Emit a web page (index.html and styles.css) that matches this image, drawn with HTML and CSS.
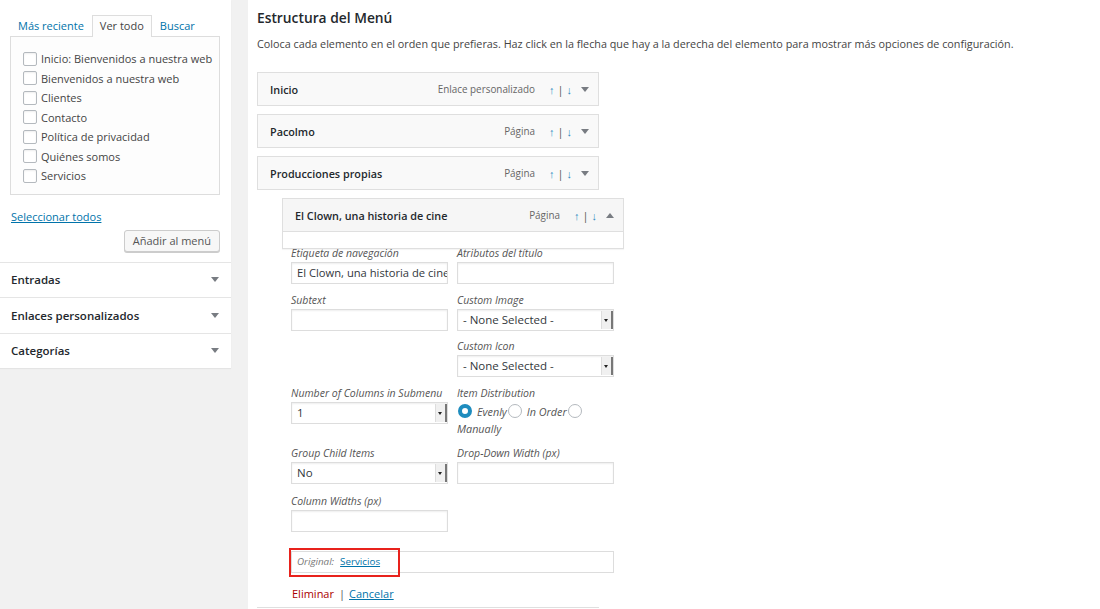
FILE: index.html
```html
<!DOCTYPE html>
<html>
<head>
<meta charset="utf-8">
<title>Menús</title>
<link rel="stylesheet" href="styles.css">
</head>
<body>
<div class="page">
  <div class="side">
    <div class="side-panel">
      <ul class="tabs">
        <li><a href="#">Más reciente</a></li>
        <li class="tab-on">Ver todo</li>
        <li><a href="#">Buscar</a></li>
      </ul>
      <ul class="checklist">
        <li><span class="cb"></span>Inicio: Bienvenidos a nuestra web</li>
        <li><span class="cb"></span>Bienvenidos a nuestra web</li>
        <li><span class="cb"></span>Clientes</li>
        <li><span class="cb"></span>Contacto</li>
        <li><span class="cb"></span>Política de privacidad</li>
        <li><span class="cb"></span>Quiénes somos</li>
        <li><span class="cb"></span>Servicios</li>
      </ul>
      <div class="select-all"><a href="#">Seleccionar todos</a></div>
      <div class="add-row"><span class="btn">Añadir al menú</span></div>
      <div class="acc">Entradas<span class="tri"></span></div>
      <div class="acc">Enlaces personalizados<span class="tri"></span></div>
      <div class="acc">Categorías<span class="tri"></span></div>
    </div>
  </div>

  <div class="main">
    <h3 class="title">Estructura del Menú</h3>
    <p class="desc">Coloca cada elemento en el orden que prefieras. Haz click en la flecha que hay a la derecha del elemento para mostrar más opciones de configuración.</p>

    <div class="item">
      <span class="item-name">Inicio</span>
      <span class="item-type">Enlace personalizado</span>
      <span class="moves"><a>↑</a><i>|</i><a>↓</a></span>
      <span class="tri"></span>
    </div>
    <div class="item">
      <span class="item-name">Pacolmo</span>
      <span class="item-type">Página</span>
      <span class="moves"><a>↑</a><i>|</i><a>↓</a></span>
      <span class="tri"></span>
    </div>
    <div class="item">
      <span class="item-name">Producciones propias</span>
      <span class="item-type">Página</span>
      <span class="moves"><a>↑</a><i>|</i><a>↓</a></span>
      <span class="tri"></span>
    </div>

    <div class="sub">
      <div class="item item-open">
        <span class="item-name">El Clown, una historia de cine</span>
        <span class="item-type">Página</span>
        <span class="moves"><a>↑</a><i>|</i><a>↓</a></span>
        <span class="tri tri-up"></span>
      </div>
      <div class="settings"></div>

      <div class="fields">
        <div class="field">
          <label>Etiqueta de navegación</label>
          <div class="inp">El Clown, una historia de cine</div>
        </div>
        <div class="field">
          <label>Atributos del título</label>
          <div class="inp"></div>
        </div>
        <div class="field">
          <label>Subtext</label>
          <div class="inp"></div>
        </div>
        <div class="field">
          <label>Custom Image</label>
          <div class="sel">- None Selected -<span class="sel-btn"></span></div>
        </div>
        <div class="field col2">
          <label>Custom Icon</label>
          <div class="sel">- None Selected -<span class="sel-btn"></span></div>
        </div>
        <div class="field">
          <label>Number of Columns in Submenu</label>
          <div class="sel">1<span class="sel-btn"></span></div>
        </div>
        <div class="field">
          <label>Item Distribution</label>
          <div class="radios">
            <span class="rd rd-on"></span><em>Evenly</em><span class="rd"></span><em>In Order</em><span class="rd"></span>
          </div>
          <div class="radio-last"><em>Manually</em></div>
        </div>
        <div class="field">
          <label>Group Child Items</label>
          <div class="sel">No<span class="sel-btn"></span></div>
        </div>
        <div class="field">
          <label>Drop-Down Width (px)</label>
          <div class="inp"></div>
        </div>
        <div class="field field-last">
          <label>Column Widths (px)</label>
          <div class="inp"></div>
        </div>
      </div>

      <div class="original">
        <em>Original:</em><a href="#">Servicios</a>
        <span class="mark"></span>
      </div>
      <div class="actions"><a class="del" href="#">Eliminar</a><i>|</i><a href="#">Cancelar</a></div>
    </div>
    <div class="next-item"></div>
  </div>
</div>
</body>
</html>
```

FILE: styles.css
```css
body {
    margin: 0;
    background-color: #f1f1f1;
    font-family: "Open Sans", "Noto Sans", sans-serif;
    font-size: 11px;
    color: #444;
}
a {
    color: #0073aa;
}
.page {
    display: flex;
    height: 609px;
    overflow: hidden;
}
.side {
    width: 231px;
    flex: none;
}
.side-panel {
    background-color: #fff;
    box-shadow: 0 1px 1px rgba(0,0,0,0.05);
}
.tabs {
    list-style: none;
    margin: 0;
    padding: 15px 0 0 10px;
    display: flex;
    line-height: 20px;
    font-size: 11px;
}
.tabs li {
    padding: 0 7px;
    border: 1px solid transparent;
    border-bottom: 0;
}
.tabs li a {
    text-decoration: none;
}
.tabs li.tab-on {
    border-color: #ddd;
    margin: 0 0 -1px 0;
    background-color: #fdfdfd;
    position: relative;
    z-index: 1;
    padding-bottom: 1px;
}
.checklist {
    list-style: none;
    margin: 0 11px 0 10px;
    padding: 12px 0 8px 12px;
    border: 1px solid #ddd;
    background-color: #fdfdfd;
    line-height: 19.5px;
}
.checklist li {
    display: flex;
    align-items: center;
}
.cb {
    width: 12px;
    height: 12px;
    border: 1px solid #b4b9be;
    border-radius: 2px;
    background-color: #fff;
    box-shadow: inset 0 1px 2px rgba(0,0,0,0.07);
    margin-right: 4px;
}
.select-all {
    padding: 14px 0 0 11px;
    line-height: 16px;
}
.add-row {
    display: flex;
    justify-content: flex-end;
    padding: 5px 11px 10px 0;
}
.btn {
    display: inline-block;
    height: 20px;
    line-height: 20px;
    padding: 0 8px;
    border: 1px solid #ccc;
    border-radius: 3px;
    background-color: #f7f7f7;
    box-shadow: 0 1px 0 #ccc;
    color: #555;
}
.acc {
    display: flex;
    justify-content: space-between;
    align-items: center;
    height: 34.5px;
    padding: 0 12px 0 11px;
    border-top: 1px solid #e5e5e5;
    font-size: 11.5px;
    font-weight: 600;
    color: #23282d;
}
.tri {
    width: 0;
    height: 0;
    border-left: 4px solid transparent;
    border-right: 4px solid transparent;
    border-top: 5px solid #787c82;
}
.tri-up {
    border-top: 0;
    border-bottom: 5px solid #787c82;
}

.main {
    flex: 1;
    margin-left: 17px;
    background-color: #fff;
    padding-left: 9px;
}
.title {
    margin: 8px 0 0 0;
    font-size: 13.8px;
    line-height: 20px;
    font-weight: 600;
    color: #23282d;
}
.desc {
    margin: 7px 0 19px 0;
    font-size: 10.8px;
    line-height: 18px;
}
.item {
    width: 340px;
    height: 32px;
    border: 1px solid #dfdfdf;
    background-color: #f9f9f9;
    display: flex;
    align-items: center;
    margin-bottom: 8px;
    font-size: 10.8px;
}
.item-name {
    flex: 1;
    padding-left: 12px;
    font-weight: 600;
    color: #23282d;
}
.item-type {
    color: #666;
    font-size: 9.9px;
}
.moves {
    margin-left: 14px;
    font-size: 11px;
    color: #999;
    display: flex;
    gap: 3px;
}
.moves a {
    color: #2e8bc0;
}
.moves i {
    font-style: normal;
    color: #555;
}
.item .tri {
    margin: 0 9px 0 9px;
}
.sub {
    margin-left: 25px;
}
.item-open {
    margin-bottom: 0;
    background-color: #f6f6f6;
}
.settings {
    width: 340px;
    height: 16px;
    border: 1px solid #dfdfdf;
    border-top: 0;
    box-shadow: 0 1px 1px rgba(0,0,0,0.04);
}
.fields {
    display: grid;
    grid-template-columns: 157px 157px;
    column-gap: 9px;
    row-gap: 6.7px;
    margin: -5px 0 0 9px;
}
.field label {
    display: block;
    font-style: italic;
    font-size: 10.5px;
    line-height: 18px;
    color: #555;
}
.field-last {
    margin-top: 2px;
}
.col2 {
    grid-column: 2;
}
.inp, .sel {
    height: 20px;
    border: 1px solid #ddd;
    box-shadow: inset 0 1px 2px rgba(0,0,0,0.07);
    background-color: #fff;
    line-height: 20px;
    padding: 0 5px;
    font-size: 11.2px;
    color: #32373c;
    white-space: nowrap;
    overflow: hidden;
}
.sel {
    display: flex;
    justify-content: space-between;
    padding-right: 0;
    font-size: 11.5px;
}
.sel-btn {
    width: 9px;
    height: 18px;
    margin: 1px 0;
    border-left: 1px solid #ddd;
    border-right: 2px solid #777;
    background-color: #f0f0f0;
    position: relative;
}
.sel-btn::after {
    content: "";
    position: absolute;
    left: 2px;
    top: 8px;
    border-left: 2.5px solid transparent;
    border-right: 2.5px solid transparent;
    border-top: 3px solid #222;
}
.radios {
    display: flex;
    align-items: center;
    height: 18px;
    font-size: 10.8px;
    color: #555;
}
.radios em {
    margin: 0 1px 0 5px;
}
.rd {
    width: 12px;
    height: 12px;
    border: 1px solid #b4b9be;
    border-radius: 50%;
    background-color: #fff;
}
.rd-on {
    width: 6px;
    height: 6px;
    border: 4px solid #1e8cbe;
    background-color: #fff;
    margin-left: 1px;
}
.radio-last {
    font-size: 10.8px;
    color: #555;
    line-height: 17px;
}
.original {
    position: relative;
    width: 316px;
    height: 20px;
    margin: 19px 0 0 9px;
    padding-left: 5px;
    border: 1px solid #ddd;
    line-height: 20px;
    font-size: 9.8px;
    color: #777;
}
.original a {
    margin-left: 6px;
}
.mark {
    position: absolute;
    left: -3px;
    top: -4px;
    width: 107px;
    height: 25px;
    border: 2px solid #e8221c;
}
.actions {
    margin: 12px 0 0 10px;
    line-height: 18px;
    font-size: 11px;
}
.actions a.del {
    color: #a00;
    text-decoration: none;
}
.actions i {
    font-style: normal;
    margin: 0 4px 0 5px;
    color: #555;
}
.next-item {
    width: 342px;
    margin-top: 4px;
    border-top: 1px solid #dfdfdf;
}
```
